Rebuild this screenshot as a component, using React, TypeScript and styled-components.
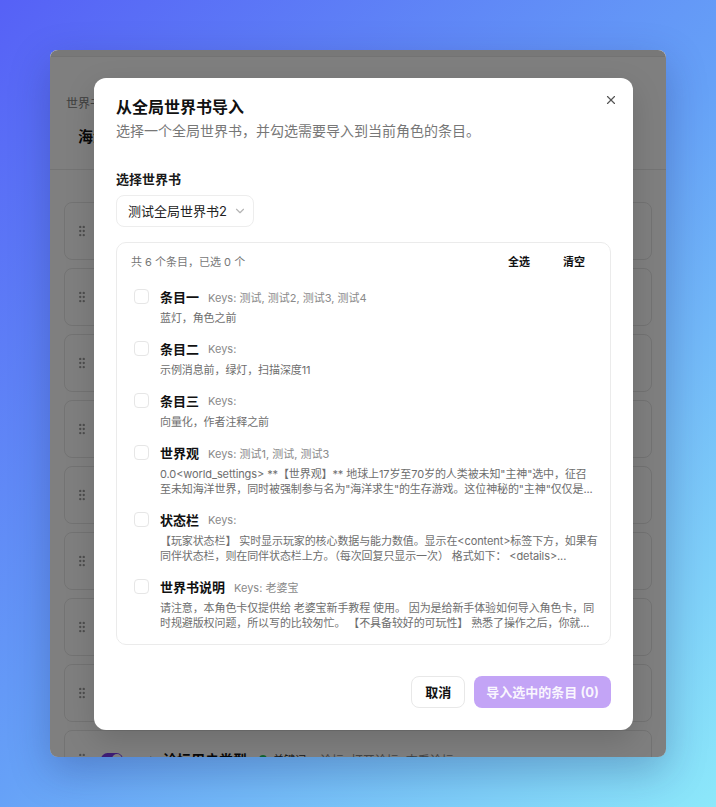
import styled, { createGlobalStyle } from "styled-components";
import { ChevronDown, ChevronRight, GripVertical, X } from "lucide-react";

const GlobalStyle = createGlobalStyle`
  * { box-sizing: border-box; }
  html, body { margin: 0; padding: 0; }
  body {
    font-family: Inter, "Noto Sans CJK SC", sans-serif;
    color: #111;
  }
`;

type Entry = { title: string; keys: string; desc: string[] };

const entries: Entry[] = [
  { title: "条目一", keys: "测试, 测试2, 测试3, 测试4", desc: ["蓝灯，角色之前"] },
  { title: "条目二", keys: "", desc: ["示例消息前，绿灯，扫描深度11"] },
  { title: "条目三", keys: "", desc: ["向量化，作者注释之前"] },
  {
    title: "世界观",
    keys: "测试1, 测试, 测试3",
    desc: [
      "0.0<world_settings> **【世界观】** 地球上17岁至70岁的人类被未知\"主神\"选中，征召",
      "至未知海洋世界，同时被强制参与名为\"海洋求生\"的生存游戏。这位神秘的\"主神\"仅仅是...",
    ],
  },
  {
    title: "状态栏",
    keys: "",
    desc: [
      "【玩家状态栏】 实时显示玩家的核心数据与能力数值。显示在<content>标签下方，如果有",
      "同伴状态栏，则在同伴状态栏上方。（每次回复只显示一次） 格式如下： <details>...",
    ],
  },
  {
    title: "世界书说明",
    keys: "老婆宝",
    desc: [
      "请注意，本角色卡仅提供给 老婆宝新手教程 使用。 因为是给新手体验如何导入角色卡，同",
      "时规避版权问题，所以写的比较匆忙。 【不具备较好的可玩性】 熟悉了操作之后，你就...",
    ],
  },
];

const bgRows = [
  { title: "世界观", keyword: "常驻", keys: "世界, 设定" },
  { title: "状态栏", keyword: "常驻", keys: "状态, 面板" },
  { title: "海洋生物", keyword: "关键词", keys: "鱼, 鲨鱼, 海怪" },
  { title: "岛屿资源", keyword: "关键词", keys: "岛, 资源" },
  { title: "船只升级", keyword: "关键词", keys: "船, 升级" },
  { title: "天气系统", keyword: "关键词", keys: "天气, 风暴" },
  { title: "交易市场", keyword: "关键词", keys: "交易, 市场" },
  { title: "排行榜", keyword: "关键词", keys: "排行, 排名" },
  { title: "论坛用户类型", keyword: "关键词", keys: "论坛, 打开论坛, 查看论坛" },
];

const App = () => {
  return (
    <>
      <GlobalStyle />
      <Page>
        <Window>
          <TopStrip />
          <BgHeader>
            <BgLabel>世界书</BgLabel>
            <BgName>海洋求生世界书</BgName>
          </BgHeader>
          <BgList>
            {bgRows.map((r) => (
              <BgRow key={r.title}>
                <GripVertical size={14} color="#9a9a9a" />
                <Toggle />
                <ChevronRight size={10} color="#999" />
                <BgTitle>{r.title}</BgTitle>
                <BgKeyword>
                  <Dot />
                  {r.keyword}
                </BgKeyword>
                <BgKeys>{r.keys}</BgKeys>
              </BgRow>
            ))}
          </BgList>

          <Overlay>
            <Modal>
              <CloseButton aria-label="关闭">
                <X size={14} strokeWidth={2} />
              </CloseButton>
              <Title>从全局世界书导入</Title>
              <Subtitle>选择一个全局世界书，并勾选需要导入到当前角色的条目。</Subtitle>

              <FieldLabel>选择世界书</FieldLabel>
              <Select>
                测试全局世界书2
                <ChevronDown size={14} color="#b5b5b5" />
              </Select>

              <EntryBox>
                <EntryBoxHeader>
                  <Count>共 6 个条目，已选 0 个</Count>
                  <HeaderActions>
                    <TextButton>全选</TextButton>
                    <TextButton>清空</TextButton>
                  </HeaderActions>
                </EntryBoxHeader>
                {entries.map((e) => (
                  <EntryRow key={e.title}>
                    <Checkbox />
                    <EntryBody>
                      <EntryHead>
                        <EntryTitle>{e.title}</EntryTitle>
                        <Keys>Keys:{e.keys ? ` ${e.keys}` : ""}</Keys>
                      </EntryHead>
                      <Desc>
                        {e.desc.map((line) => (
                          <DescLine key={line}>{line}</DescLine>
                        ))}
                      </Desc>
                    </EntryBody>
                  </EntryRow>
                ))}
              </EntryBox>

              <Footer>
                <CancelButton>取消</CancelButton>
                <PrimaryButton disabled>导入选中的条目 (0)</PrimaryButton>
              </Footer>
            </Modal>
          </Overlay>
        </Window>
      </Page>
    </>
  );
};

const Page = styled.div`
  width: 716px;
  height: 807px;
  padding: 50px 50px 0 50px;
  background: linear-gradient(135deg, #5661f6 0%, #66a1f7 52%, #8ce8fa 100%);
  overflow: hidden;
`;

const Window = styled.div`
  position: relative;
  width: 616px;
  height: 707px;
  border-radius: 8px;
  overflow: hidden;
  background: #fff;
  box-shadow: 0 14px 40px rgba(20, 30, 90, 0.28);
`;

const TopStrip = styled.div`
  height: 7px;
  background: #f1f1f1;
  border-bottom: 1px solid #e6e6e6;
`;

const BgHeader = styled.div`
  padding: 39px 16px 21px;
  border-bottom: 1px solid #e8e8e8;
`;

const BgLabel = styled.div`
  font-size: 12px;
  line-height: 16px;
  color: #808080;
`;

const BgName = styled.div`
  margin-top: 14px;
  padding: 0 12px;
  font-size: 15px;
  line-height: 22px;
  font-weight: 700;
  color: #111;
`;

const BgList = styled.div`
  display: flex;
  flex-direction: column;
  gap: 8px;
  padding: 32px 14px 0;
`;

const BgRow = styled.div`
  display: flex;
  align-items: center;
  gap: 8px;
  flex-shrink: 0;
  height: 58px;
  padding: 0 10px;
  border: 1px solid #e6e6e6;
  border-radius: 8px;
  background: #fff;

  & > svg:first-child {
    margin-right: 4px;
  }
`;

const Toggle = styled.span`
  position: relative;
  width: 22px;
  height: 13px;
  border-radius: 7px;
  background: #7c3aed;
  flex-shrink: 0;
  margin-right: 16px;

  &::after {
    content: "";
    position: absolute;
    top: 1.5px;
    right: 1.5px;
    width: 10px;
    height: 10px;
    border-radius: 50%;
    background: #fff;
  }
`;

const BgTitle = styled.span`
  margin: 0 4px 0 -2px;
  font-size: 14px;
  font-weight: 700;
  color: #111;
`;

const BgKeyword = styled.span`
  display: inline-flex;
  align-items: center;
  gap: 6px;
  margin-right: 6px;
  font-size: 11px;
  color: #333;
`;

const Dot = styled.span`
  width: 8px;
  height: 8px;
  border-radius: 50%;
  background: #22c55e;
`;

const BgKeys = styled.span`
  font-size: 12px;
  color: #888;
`;

const Overlay = styled.div`
  position: absolute;
  inset: 0;
  display: flex;
  align-items: center;
  padding-left: 44px;
  background: rgba(0, 0, 0, 0.5);
`;

const Modal = styled.div`
  position: relative;
  width: 539px;
  height: 652px;
  padding: 18px 22px 22px;
  border-radius: 12px;
  background: #fff;
  box-shadow: 0 10px 30px rgba(0, 0, 0, 0.15);
`;

const CloseButton = styled.button`
  position: absolute;
  top: 15px;
  right: 15px;
  display: flex;
  align-items: center;
  justify-content: center;
  width: 14px;
  height: 14px;
  padding: 0;
  border: none;
  background: none;
  color: #555;
`;

const Title = styled.h2`
  margin: 0;
  font-size: 16px;
  line-height: 22px;
  font-weight: 700;
  color: #111;
`;

const Subtitle = styled.p`
  margin: 3px 0 0;
  font-size: 14px;
  line-height: 20px;
  color: #777;
`;

const FieldLabel = styled.div`
  margin-top: 29px;
  font-size: 13px;
  line-height: 18px;
  font-weight: 600;
  color: #1a1a1a;
`;

const Select = styled.button`
  display: flex;
  align-items: center;
  gap: 6px;
  height: 32px;
  margin-top: 7px;
  padding: 0 6px 0 11px;
  border: 1px solid #ededed;
  border-radius: 8px;
  background: #fff;
  font-family: inherit;
  font-size: 13px;
  color: #222;
`;

const EntryBox = styled.div`
  margin-top: 15px;
  padding: 9px 8px 6px 14px;
  border: 1px solid #ebebeb;
  border-radius: 10px;
`;

const EntryBoxHeader = styled.div`
  display: flex;
  align-items: center;
  justify-content: space-between;
  height: 18px;
  margin-bottom: 11px;
`;

const Count = styled.span`
  font-size: 11px;
  color: #777;
`;

const HeaderActions = styled.div`
  display: flex;
  gap: 13px;
  margin-right: 7px;
`;

const TextButton = styled.button`
  padding: 0 10px;
  border: none;
  background: none;
  font-family: inherit;
  font-size: 11px;
  font-weight: 700;
  color: #111;
`;

const EntryRow = styled.div`
  display: flex;
  align-items: flex-start;
  gap: 11px;
  padding: 7px 0 7px 3px;
`;

const Checkbox = styled.span`
  flex-shrink: 0;
  width: 15px;
  height: 15px;
  margin-top: 1.5px;
  border: 1px solid #e6e6e6;
  border-radius: 4px;
  background: #fff;
`;

const EntryBody = styled.div`
  flex: 1;
  min-width: 0;
`;

const EntryHead = styled.div`
  display: flex;
  align-items: center;
  gap: 9px;
  height: 18px;
`;

const EntryTitle = styled.span`
  font-size: 13px;
  font-weight: 700;
  color: #111;
`;

const Keys = styled.span`
  font-size: 11px;
  color: #8a8a8a;
`;

const Desc = styled.div`
  margin-top: 5px;
  font-size: 11px;
  line-height: 15px;
  letter-spacing: -0.1px;
  color: #6e6e6e;
`;

const DescLine = styled.span`
  display: block;
  white-space: nowrap;
  overflow: hidden;
`;

const Footer = styled.div`
  display: flex;
  justify-content: flex-end;
  gap: 9px;
  margin-top: 31px;
`;

const CancelButton = styled.button`
  height: 32px;
  padding: 0 13px;
  border: 1px solid #e8e8e8;
  border-radius: 8px;
  background: #fff;
  font-family: inherit;
  font-size: 13px;
  font-weight: 700;
  color: #111;
`;

const PrimaryButton = styled.button`
  height: 32px;
  padding: 0 12px;
  border: none;
  border-radius: 8px;
  background: #c3a4f6;
  font-family: inherit;
  font-size: 13px;
  font-weight: 700;
  color: rgba(255, 255, 255, 0.92);
`;

export default App;
